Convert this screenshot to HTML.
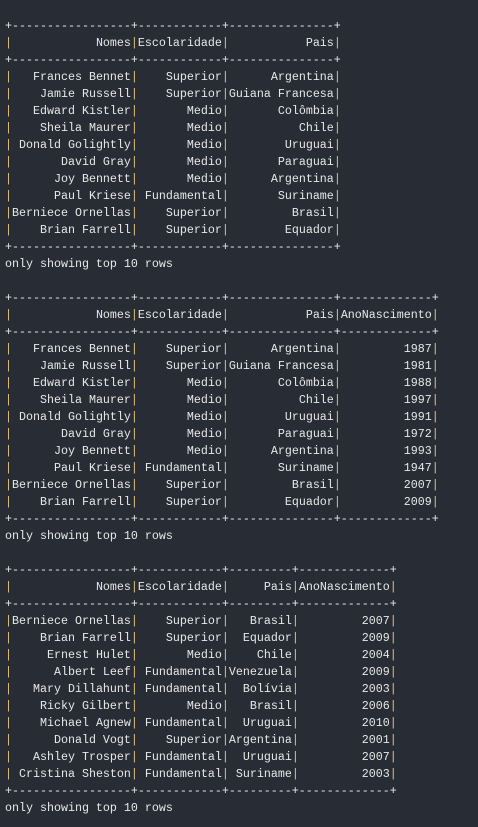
<!DOCTYPE html>
<html><head><meta charset="utf-8"><style>
html,body{margin:0;padding:0;background:#282c34;width:478px;height:827px;overflow:hidden}
pre{margin:0;padding:18px 0 0 5px;font-family:"Liberation Mono",monospace;font-size:11.67px;line-height:17px;color:#e8e8e8}
b{font-weight:normal;color:#e5c07b}
</style></head><body><pre>+-----------------+------------+---------------+
<b>|</b>            Nomes<b>|</b>Escolaridade<b>|</b>           Pais<b>|</b>
+-----------------+------------+---------------+
<b>|</b>   Frances Bennet<b>|</b>    Superior<b>|</b>      Argentina<b>|</b>
<b>|</b>    Jamie Russell<b>|</b>    Superior<b>|</b>Guiana Francesa<b>|</b>
<b>|</b>   Edward Kistler<b>|</b>       Medio<b>|</b>       Colômbia<b>|</b>
<b>|</b>    Sheila Maurer<b>|</b>       Medio<b>|</b>          Chile<b>|</b>
<b>|</b> Donald Golightly<b>|</b>       Medio<b>|</b>        Uruguai<b>|</b>
<b>|</b>       David Gray<b>|</b>       Medio<b>|</b>       Paraguai<b>|</b>
<b>|</b>      Joy Bennett<b>|</b>       Medio<b>|</b>      Argentina<b>|</b>
<b>|</b>      Paul Kriese<b>|</b> Fundamental<b>|</b>       Suriname<b>|</b>
<b>|</b>Berniece Ornellas<b>|</b>    Superior<b>|</b>         Brasil<b>|</b>
<b>|</b>    Brian Farrell<b>|</b>    Superior<b>|</b>        Equador<b>|</b>
+-----------------+------------+---------------+
only showing top 10 rows

+-----------------+------------+---------------+-------------+
<b>|</b>            Nomes<b>|</b>Escolaridade<b>|</b>           Pais<b>|</b>AnoNascimento<b>|</b>
+-----------------+------------+---------------+-------------+
<b>|</b>   Frances Bennet<b>|</b>    Superior<b>|</b>      Argentina<b>|</b>         1987<b>|</b>
<b>|</b>    Jamie Russell<b>|</b>    Superior<b>|</b>Guiana Francesa<b>|</b>         1981<b>|</b>
<b>|</b>   Edward Kistler<b>|</b>       Medio<b>|</b>       Colômbia<b>|</b>         1988<b>|</b>
<b>|</b>    Sheila Maurer<b>|</b>       Medio<b>|</b>          Chile<b>|</b>         1997<b>|</b>
<b>|</b> Donald Golightly<b>|</b>       Medio<b>|</b>        Uruguai<b>|</b>         1991<b>|</b>
<b>|</b>       David Gray<b>|</b>       Medio<b>|</b>       Paraguai<b>|</b>         1972<b>|</b>
<b>|</b>      Joy Bennett<b>|</b>       Medio<b>|</b>      Argentina<b>|</b>         1993<b>|</b>
<b>|</b>      Paul Kriese<b>|</b> Fundamental<b>|</b>       Suriname<b>|</b>         1947<b>|</b>
<b>|</b>Berniece Ornellas<b>|</b>    Superior<b>|</b>         Brasil<b>|</b>         2007<b>|</b>
<b>|</b>    Brian Farrell<b>|</b>    Superior<b>|</b>        Equador<b>|</b>         2009<b>|</b>
+-----------------+------------+---------------+-------------+
only showing top 10 rows

+-----------------+------------+---------+-------------+
<b>|</b>            Nomes<b>|</b>Escolaridade<b>|</b>     Pais<b>|</b>AnoNascimento<b>|</b>
+-----------------+------------+---------+-------------+
<b>|</b>Berniece Ornellas<b>|</b>    Superior<b>|</b>   Brasil<b>|</b>         2007<b>|</b>
<b>|</b>    Brian Farrell<b>|</b>    Superior<b>|</b>  Equador<b>|</b>         2009<b>|</b>
<b>|</b>     Ernest Hulet<b>|</b>       Medio<b>|</b>    Chile<b>|</b>         2004<b>|</b>
<b>|</b>      Albert Leef<b>|</b> Fundamental<b>|</b>Venezuela<b>|</b>         2009<b>|</b>
<b>|</b>   Mary Dillahunt<b>|</b> Fundamental<b>|</b>  Bolívia<b>|</b>         2003<b>|</b>
<b>|</b>    Ricky Gilbert<b>|</b>       Medio<b>|</b>   Brasil<b>|</b>         2006<b>|</b>
<b>|</b>    Michael Agnew<b>|</b> Fundamental<b>|</b>  Uruguai<b>|</b>         2010<b>|</b>
<b>|</b>      Donald Vogt<b>|</b>    Superior<b>|</b>Argentina<b>|</b>         2001<b>|</b>
<b>|</b>   Ashley Trosper<b>|</b> Fundamental<b>|</b>  Uruguai<b>|</b>         2007<b>|</b>
<b>|</b> Cristina Sheston<b>|</b> Fundamental<b>|</b> Suriname<b>|</b>         2003<b>|</b>
+-----------------+------------+---------+-------------+
only showing top 10 rows
</pre></body></html>
